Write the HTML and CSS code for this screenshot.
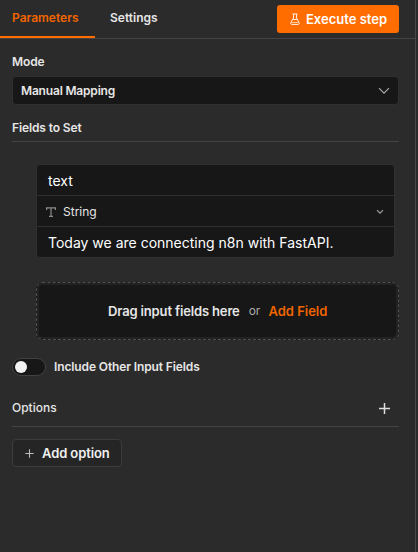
FILE: index.html
```html
<!DOCTYPE html>
<html lang="en">
<head>
<meta charset="utf-8">
<title>Parameters</title>
<link rel="stylesheet" href="styles.css">
</head>
<body>
<main class="panel">
  <header class="header">
    <nav class="tabs">
      <span class="tab tab-active">Parameters</span>
      <span class="tab">Settings</span>
    </nav>
    <button class="execute">
      <svg width="10" height="12" viewBox="0 0 10 12" fill="none" stroke="currentColor" stroke-width="1"><path d="M2.500 1h5M3.500 1v4L.9 9.600c-.4.9 0 1.800.9 1.800h6.400c.9 0 1.300-.9.9-1.800L6.500 5V1M3 6.500h4"/><path d="M1.500 9.500h7" opacity=".7"/></svg>
      <span>Execute step</span>
    </button>
  </header>
  <section class="content">
    <div class="label mode-label">Mode</div>
    <div class="select">
      <span>Manual Mapping</span>
      <svg width="12" height="8" viewBox="0 0 12 8" fill="none" stroke="#b0b0b0" stroke-width="1.1"><path d="M1 1.200l5 5 5-5"/></svg>
    </div>
    <div class="label fields-label">Fields to Set</div>
    <div class="assignment">
      <div class="row value">text</div>
      <div class="row type">
        <svg width="10" height="10" viewBox="0 0 10 10" fill="none" stroke="#8c8c8c" stroke-width="1.2"><path d="M.6 3V.8h8.800V3M5 .8v8.400M3 9.300h4"/></svg>
        <span>String</span>
        <svg class="chevron" width="8" height="6" viewBox="0 0 8 6" fill="none" stroke="#a0a0a0" stroke-width="1.2"><path d="M1 1.200l3 3 3-3"/></svg>
      </div>
      <div class="row value last">Today we are connecting n8n with FastAPI.</div>
    </div>
    <div class="drop">
      <svg class="dashes" width="363" height="58" fill="none"><rect x=".5" y=".5" width="362" height="57" rx="6" stroke="#191919"/><rect x=".5" y=".5" width="362" height="57" rx="6" stroke="#505050" stroke-dasharray="3 2"/></svg>
      <div class="drop-inner">
        <span class="drag-text">Drag input fields here</span>
        <span class="or">or</span>
        <span class="add-field">Add Field</span>
      </div>
    </div>
    <div class="toggle-row">
      <span class="toggle"><span class="knob"></span></span>
      <span class="toggle-label">Include Other Input Fields</span>
    </div>
    <div class="options">
      <span>Options</span>
      <svg width="11" height="11" viewBox="0 0 11 11" fill="none" stroke="#dedede" stroke-width="1.500"><path d="M5.500 0v11M0 5.500h11"/></svg>
    </div>
    <button class="add-option">
      <svg width="9" height="9" viewBox="0 0 9 9" fill="none" stroke="#bcbcbc" stroke-width="1.100"><path d="M4.500 .3v8.400M.3 4.500h8.400"/></svg>
      <span>Add option</span>
    </button>
  </section>
</main>
</body>
</html>
```
FILE: styles.css
```css
* { box-sizing: border-box; }
body {
  margin: 0;
  background: #2b2b2b;
  color: #e6e6e6;
  font: 500 12px/16px Inter, sans-serif;
}
button { font: inherit; margin: 0; }
svg { display: block; flex: none; }
span { white-space: nowrap; }
.panel {
  width: 416px;
  height: 552px;
  border-right: 1px solid #484848;
}
.header {
  display: flex;
  justify-content: space-between;
  height: 39px;
  border-bottom: 1px solid #444;
}
.tabs { display: flex; }
.tab {
  height: 38px;
  padding: 10px 0 0 12px;
  font-weight: 600;
}
.tab-active {
  width: 95px;
  margin-right: 3px;
  border-bottom: 2px solid #ff6d00;
  color: #f26500;
}
.execute {
  display: flex;
  align-items: center;
  gap: 6px;
  width: 122px;
  height: 28px;
  margin: 5px 16px 0 0;
  padding: 0 0 0 13px;
  border: 0;
  border-radius: 3px;
  background: #ff6d00;
  color: #fff;
  font-size: 13px;
  font-weight: 600;
}
.execute svg { opacity: .9; }
.content { padding: 0 16px 0 12px; }
.label, .select, .toggle-label {
  font-weight: 600;
  letter-spacing: -.12px;
}
.mode-label { padding: 15px 0 6px; }
.select {
  display: flex;
  align-items: center;
  justify-content: space-between;
  width: 387px;
  height: 29px;
  padding: 0 8px;
  border: 1px solid #303030;
  border-radius: 4px;
  background: #171717;
  letter-spacing: -.18px;
}
.fields-label {
  height: 37px;
  padding-top: 15px;
  border-bottom: 1px solid #444;
}
.assignment {
  width: 359px;
  height: 94px;
  margin: 22px 0 0 24px;
  border: 1px solid #303030;
  border-radius: 4px;
  background: #171717;
}
.row {
  display: flex;
  align-items: center;
  height: 31px;
  border-bottom: 1px solid #303030;
}
.value {
  padding: 2px 0 0 11px;
  color: #fff;
  font-size: 14px;
  font-weight: 400;
}
.row.last {
  height: 30px;
  border-bottom: 0;
}
.type {
  gap: 7px;
  padding: 1px 10px 0 9px;
  font-weight: 400;
}
.chevron { margin-left: auto; }
.drop {
  position: relative;
  width: 363px;
  height: 58px;
  margin: 24px 0 0 24px;
  padding: 1px;
}
.dashes { position: absolute; inset: 0; }
.drop-inner {
  display: flex;
  align-items: center;
  height: 56px;
  padding-left: 69px;
  border: 2px solid #222;
  border-radius: 6px;
  background: #171717;
  font-size: 13px;
}
.drag-text { font-weight: 600; letter-spacing: -.15px; }
.or {
  margin: 0 8px 0 9px;
  color: #aaa;
  font-size: 12px;
  font-weight: 400;
}
.add-field { color: #ef6500; font-weight: 600; }
.toggle-row {
  display: flex;
  align-items: center;
  gap: 8px;
  height: 18px;
  margin-top: 18px;
}
.toggle {
  display: flex;
  align-items: center;
  width: 34px;
  height: 18px;
  padding-left: 2px;
  border: 1px solid #424242;
  border-radius: 9px;
  background: #171717;
}
.knob {
  width: 12px;
  height: 12px;
  border-radius: 50%;
  background: #f3f3f3;
}
.options {
  display: flex;
  align-items: center;
  justify-content: space-between;
  height: 37px;
  margin-top: 14px;
  padding-right: 9px;
  border-bottom: 1px solid #444;
}
.add-option {
  display: flex;
  align-items: center;
  gap: 8px;
  width: 110px;
  height: 28px;
  margin-top: 12px;
  padding: 0 0 0 12px;
  border: 1px solid #3c3c3c;
  border-radius: 4px;
  background: #252525;
  color: #f0f0f0;
  font-size: 13px;
  font-weight: 600;
  letter-spacing: -.1px;
}
```
